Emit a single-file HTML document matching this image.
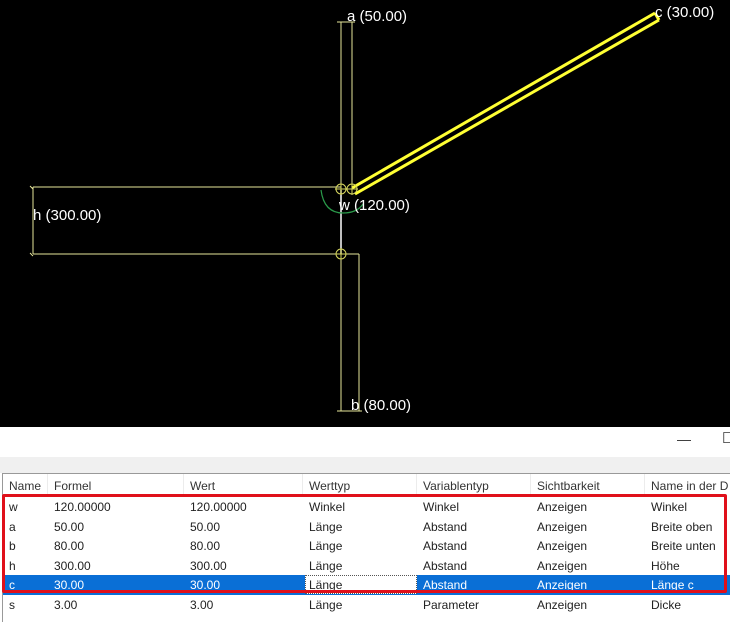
<!DOCTYPE html>
<html><head><style>
body{margin:0;width:730px;height:621px;overflow:hidden;background:#fff;font-family:"Liberation Sans",sans-serif;position:relative}
.cv{position:absolute;left:0;top:0;width:730px;height:427px;background:#000}
.lbl{position:absolute;color:#fff;font-size:15px;white-space:nowrap}
.tb{position:absolute;top:427px;left:0;width:730px;height:30px;background:#fff}
.band{position:absolute;top:457px;left:0;width:730px;height:16px;background:#f0f0f0}
.tbl{position:absolute;top:473px;left:2px;width:728px;height:148px;border-left:1px solid #999;border-top:1px solid #999;background:#fff}
.row{position:absolute;left:0;height:19.6px;width:728px;font-size:12px;color:#222;white-space:nowrap}
.row span{position:absolute;top:3px}
.hdr{top:0;height:22px}
.hdr span{top:5px;color:#333}
.sep{position:absolute;top:0;height:22px;width:1px;background:#ececec}
.sel{background:#0a6fd6;color:#fff}
</style></head><body>
<div class="cv">
<svg width="730" height="427" style="position:absolute;left:0;top:0">
<g stroke="#e6e69a" stroke-width="1" fill="none">
<path d="M341 22V187M352 22V187M337 22H355"/>
<path d="M33 187V254M33 187H341M33 254H341M30 186l3 3M30 253l3 3"/>
<path d="M341 254V411M359 254V411M341 254H359M337 411H362"/>
</g>
<path d="M341 190V254" stroke="#fff" stroke-width="1.5"/>
<path d="M352 188L655 13M355 194L659 20M655 13L659 20" stroke="#ffff33" stroke-width="3"/>
<path d="M321 190Q324 213 343 213Q357 213 363 204" stroke="#2a9a4a" stroke-width="1.2" fill="none"/>
<g stroke="#d8d860" fill="none" stroke-width="1">
<circle cx="341" cy="189" r="5"/><circle cx="352" cy="189" r="5"/><circle cx="341" cy="254" r="5"/>
<path d="M335 189H358M341 183V195M352 183V195M335 254H347M341 248V260"/>
</g>
</svg>
<div class="lbl" style="left:347px;top:8px">a (50.00)</div>
<div class="lbl" style="left:655px;top:4px">c (30.00)</div>
<div class="lbl" style="left:33px;top:207px">h (300.00)</div>
<div class="lbl" style="left:339px;top:197px">w (120.00)</div>
<div class="lbl" style="left:351px;top:397px">b (80.00)</div>
</div>
<div class="tb"><span style="position:absolute;left:677px;top:4px;font-size:14px;color:#333">—</span><span style="position:absolute;left:722px;top:2px;font-size:15px;color:#333">☐</span></div>
<div class="band"></div>
<div class="tbl">
<div class="row hdr"><span style="left:6px">Name</span><span style="left:51px">Formel</span><span style="left:187px">Wert</span><span style="left:306px">Werttyp</span><span style="left:420px">Variablentyp</span><span style="left:534px">Sichtbarkeit</span><span style="left:648px">Name in der D</span>
<div class="sep" style="left:44px"></div><div class="sep" style="left:180px"></div><div class="sep" style="left:299px"></div><div class="sep" style="left:413px"></div><div class="sep" style="left:527px"></div><div class="sep" style="left:641px"></div></div>
<div class="row" style="top:23px"><span style="left:6px">w</span><span style="left:51px">120.00000</span><span style="left:187px">120.00000</span><span style="left:306px">Winkel</span><span style="left:420px">Winkel</span><span style="left:534px">Anzeigen</span><span style="left:648px">Winkel</span></div>
<div class="row" style="top:42.6px"><span style="left:6px">a</span><span style="left:51px">50.00</span><span style="left:187px">50.00</span><span style="left:306px">Länge</span><span style="left:420px">Abstand</span><span style="left:534px">Anzeigen</span><span style="left:648px">Breite oben</span></div>
<div class="row" style="top:62.2px"><span style="left:6px">b</span><span style="left:51px">80.00</span><span style="left:187px">80.00</span><span style="left:306px">Länge</span><span style="left:420px">Abstand</span><span style="left:534px">Anzeigen</span><span style="left:648px">Breite unten</span></div>
<div class="row" style="top:81.8px"><span style="left:6px">h</span><span style="left:51px">300.00</span><span style="left:187px">300.00</span><span style="left:306px">Länge</span><span style="left:420px">Abstand</span><span style="left:534px">Anzeigen</span><span style="left:648px">Höhe</span></div>
<div class="row sel" style="top:101.4px"><div style="position:absolute;left:302px;top:0;width:112px;height:19px;background:#fff;border:1px dotted #555;box-sizing:border-box"></div><span style="left:6px">c</span><span style="left:51px">30.00</span><span style="left:187px">30.00</span><span style="left:306px;color:#222">Länge</span><span style="left:420px">Abstand</span><span style="left:534px">Anzeigen</span><span style="left:648px">Länge c</span></div>
<div class="row" style="top:121px"><span style="left:6px">s</span><span style="left:51px">3.00</span><span style="left:187px">3.00</span><span style="left:306px">Länge</span><span style="left:420px">Parameter</span><span style="left:534px">Anzeigen</span><span style="left:648px">Dicke</span></div>
</div>
<div style="position:absolute;left:2px;top:494px;width:725px;height:99px;border:3px solid #e0101a;box-sizing:border-box;border-radius:2px"></div>
</body></html>
